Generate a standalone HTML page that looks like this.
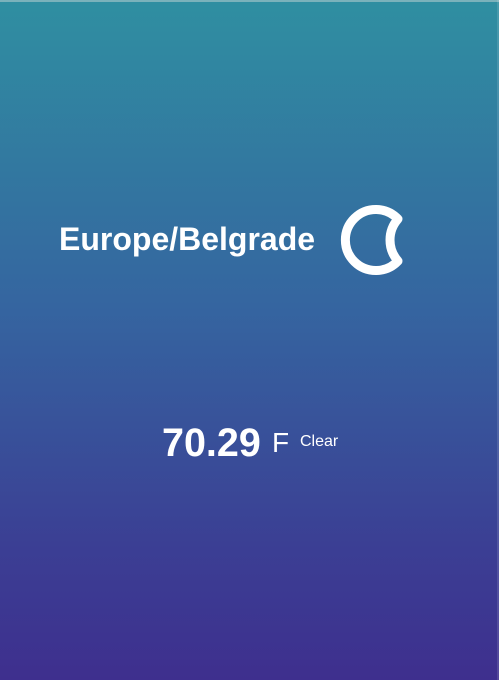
<!DOCTYPE html>
<html><head><style>
html,body{margin:0;padding:0}
body{width:499px;height:680px;overflow:hidden;position:relative;font-family:"Liberation Sans",sans-serif;color:#fff;
background:linear-gradient(180deg,#2f8fa1 0%,#3565a0 45%,#3b3f94 80%,#3e2f8e 100%)}
.t{position:absolute;white-space:nowrap}
</style></head><body>
<div style="position:absolute;left:0;top:0;width:499px;height:2px;background:#7ab2bb"></div>
<div style="position:absolute;right:0;top:0;width:2px;height:680px;background:rgba(255,255,255,0.12)"></div>
<div class="t" style="left:59px;top:221px;font-size:32px;font-weight:bold">Europe/Belgrade</div>
<svg style="position:absolute;left:0;top:0" width="499" height="680">
<path d="M398 219 A30.5 30.5 0 1 0 398 261 A31.6 31.6 0 0 1 398 219 Z" fill="none" stroke="#fff" stroke-width="9" stroke-linejoin="round"/>
</svg>
<div class="t" style="left:162px;top:421px;font-size:39.5px;font-weight:bold">70.29</div>
<div class="t" style="left:272px;top:427px;font-size:28px">F</div>
<div class="t" style="left:300px;top:433px;font-size:16px">Clear</div>
</body></html>
